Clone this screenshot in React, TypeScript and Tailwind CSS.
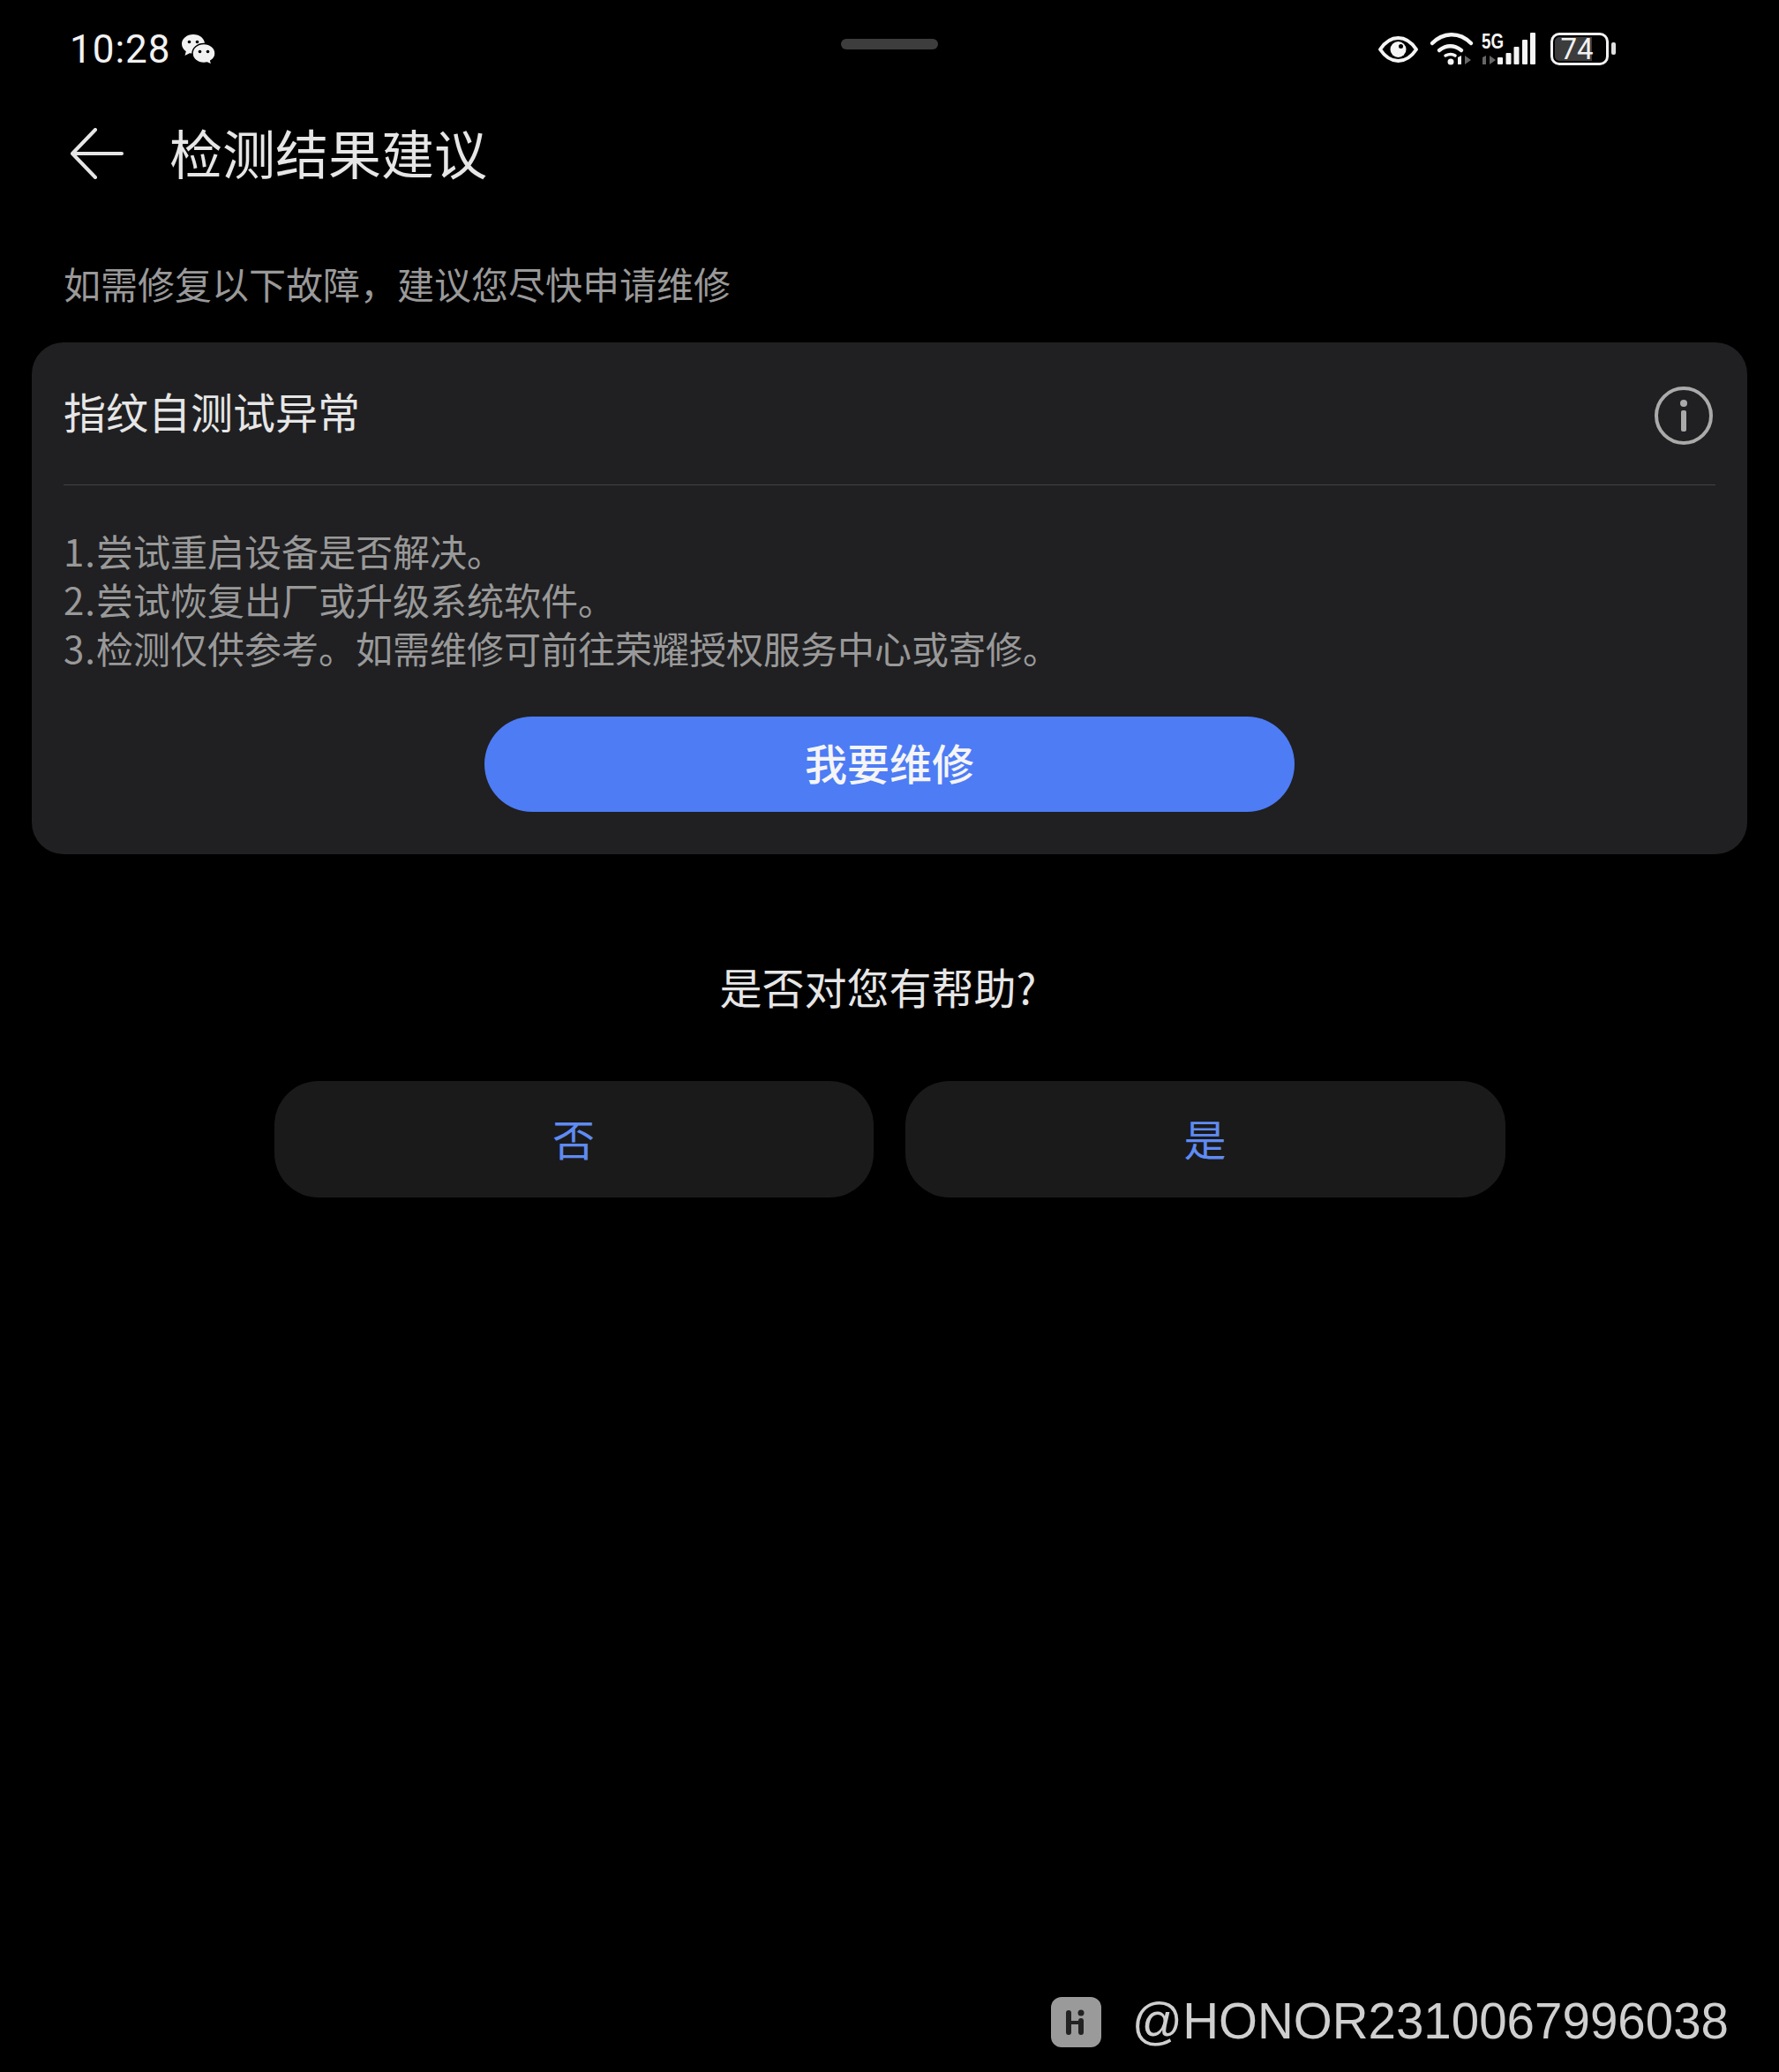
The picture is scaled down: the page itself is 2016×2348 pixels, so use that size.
import React from 'react'

const cjk = 'font-["Noto_Sans_CJK_SC","Noto_Sans",sans-serif]'

function WechatIcon() {
  return (
    <svg width="40" height="36" viewBox="0 0 40 36" fill="none">
      <path d="M14 1C6.8 1 1 5.8 1 11.8c0 3.4 1.9 6.4 4.8 8.4L4.5 25l5.4-2.7c1.3.3 2.7.5 4.1.5 7.200 0 13-4.800 13-11S21.200 1 14 1z" fill="#f2f2f2" />
      <circle cx="9.500" cy="9.500" r="1.800" fill="#000" />
      <circle cx="18.500" cy="9.500" r="1.800" fill="#000" />
      <path d="M26 11.500c-7.200 0-13 4.900-13 11s5.800 11 13 11c1.300 0 2.600-.2 3.800-.5l5.200 2.500-1.200-4.500c3.200-2 5.200-5.100 5.200-8.500 0-6.100-5.800-11-13-11z" fill="#f2f2f2" stroke="#000" strokeWidth="1.500" />
      <circle cx="21.500" cy="20.500" r="1.800" fill="#000" />
      <circle cx="30.500" cy="20.500" r="1.800" fill="#000" />
    </svg>
  )
}

function StatusIcons() {
  return (
    <svg width="184" height="44" viewBox="0 0 184 44" fill="none">
      {/* eye */}
      <path d="M4 22C10 13 17 9 24.500 9S39 13 45 22c-6 9-13 13-20.500 13S10 31 4 22z" stroke="#f5f5f5" strokeWidth="4" strokeLinejoin="round" />
      <circle cx="24.500" cy="22" r="9" fill="#f5f5f5" />
      <circle cx="27.500" cy="18.500" r="2.500" fill="#000" />
      {/* wifi */}
      <path d="M63 15c12-12 30-14 44 0" stroke="#f5f5f5" strokeWidth="4.500" strokeLinecap="round" />
      <path d="M71 23c8-6 17-6 25 0" stroke="#f5f5f5" strokeWidth="4.500" strokeLinecap="round" />
      <path d="M78 29c4-2 8-2 11 0" stroke="#f5f5f5" strokeWidth="3.500" strokeLinecap="round" />
      <circle cx="84" cy="36" r="3.500" fill="#f5f5f5" />
      <path d="M92 31l4-2v10h-4z" fill="#f5f5f5" />
      <path d="M100 29v10l7-5z" fill="#666" />
      {/* sim arrows */}
      <path d="M120 31l4-2v10h-4z" fill="#666" />
      <path d="M128 29v10l7-5z" fill="#666" />
      {/* 5G */}
      <text x="119" y="21" fill="#f5f5f5" fontSize="23" fontWeight="700" fontFamily="Liberation Sans, sans-serif" textLength="25" lengthAdjust="spacingAndGlyphs">5G</text>
      {/* signal */}
      <rect x="137" y="31" width="6" height="8" rx="1" fill="#f5f5f5" />
      <rect x="146.500" y="26" width="6" height="13" rx="1" fill="#f5f5f5" />
      <rect x="155.500" y="19" width="6" height="20" rx="1" fill="#f5f5f5" />
      <rect x="165" y="11" width="6" height="28" rx="1" fill="#f5f5f5" />
      <rect x="174" y="3" width="6" height="36" rx="1" fill="#f5f5f5" />
    </svg>
  )
}

function Battery() {
  return (
    <div className="flex items-center gap-[3px] -mt-[2px]">
      <div className="relative w-[66px] h-[37px] rounded-[10px] border-[3px] border-[#f2f2f2] overflow-hidden">
        <div className="absolute left-[2px] top-[2px] bottom-[2px] w-[42px] rounded-l-[5px] bg-[#3c3c3c]" />
        <span className='absolute inset-0 flex items-center justify-center pr-[6px] text-[33px] leading-none text-[#f2f2f2] font-["Roboto",sans-serif]'>74</span>
      </div>
      <div className="w-[5px] h-[14px] rounded-[2px] bg-[#e0e0e0]" />
    </div>
  )
}

export default function App() {
  return (
    <div className={`w-[2016px] h-[2348px] bg-black flex flex-col ${cjk}`}>
      {/* status bar */}
      <div className="h-[112px] pt-[32px] grid grid-cols-[1fr_110px_1fr] items-start">
        <div className="pl-[79px] flex items-center gap-[11px] h-[48px]">
          <span className='text-[44px] leading-none text-[#f2f2f2] font-["Roboto",sans-serif] tracking-[1px]'>10:28</span>
          <WechatIcon />
        </div>
        <div className="mt-[12px] h-[12px] rounded-full bg-[#3d3d3d]" />
        <div className="pr-[185px] flex justify-end items-center gap-[13px] h-[48px]">
          <StatusIcons />
          <Battery />
        </div>
      </div>

      {/* title */}
      <div className="h-[126px] pl-[80px] flex items-center gap-[52px]">
        <svg width="60" height="58" viewBox="0 0 60 58" fill="none" className="shrink-0 -mt-[2px]">
          <path d="M28 2L2 29l26 27" stroke="#e6e6e6" strokeWidth="4" strokeLinecap="round" strokeLinejoin="round" />
          <path d="M3 29h55" stroke="#e6e6e6" strokeWidth="4" strokeLinecap="round" />
        </svg>
        <h1 className="pb-[6px] text-[60px] leading-none font-normal text-[#e6e6e6]">检测结果建议</h1>
      </div>

      {/* subtitle */}
      <p className="mt-[53px] ml-[72px] text-[42px] leading-[60px] text-[#999999]">如需修复以下故障，建议您尽快申请维修</p>

      {/* card */}
      <div className="mt-[37px] mx-[36px] h-[580px] rounded-[36px] bg-[#202022] px-[36px] flex flex-col">
        <div className="h-[162px] flex items-center justify-between border-b border-[#424244]">
          <span className="pb-[8px] text-[48px] leading-none text-[#e6e6e6]">指纹自测试异常</span>
          <svg width="66" height="66" viewBox="0 0 66 66" fill="none" className="mr-[3px] mt-[4px]">
            <circle cx="33" cy="33" r="31" stroke="#aaaaaa" strokeWidth="4" />
            <circle cx="33" cy="19" r="4" fill="#aaaaaa" />
            <rect x="30" y="27" width="6" height="24" rx="2" fill="#aaaaaa" />
          </svg>
        </div>
        <div className="mt-[46px] text-[42px] leading-[55px] text-[#999999]">
          <p><span className="tracking-[1px]">1.</span>尝试重启设备是否解决。</p>
          <p><span className="tracking-[1px]">2.</span>尝试恢复出厂或升级系统软件。</p>
          <p><span className="tracking-[1px]">3.</span>检测仅供参考。如需维修可前往荣耀授权服务中心或寄修。</p>
        </div>
        <button className="mt-[51px] mx-auto w-[918px] h-[108px] rounded-[54px] bg-[#4d7cf5] pb-[6px] text-[48px] font-medium text-[#f5f5f5]">
          我要维修
        </button>
      </div>

      {/* feedback */}
      <p className="mt-[113px] pr-[26px] text-center text-[48px] leading-[72px] text-[#e6e6e6]">是否对您有帮助?</p>
      <div className="mt-[72px] flex justify-center gap-[36px]">
        <button className="w-[679px] h-[132px] rounded-[50px] bg-[#1a1a1a] pb-[5px] text-[48px] text-[#5f8bf2]">否</button>
        <button className="w-[680px] h-[132px] rounded-[50px] bg-[#1a1a1a] pb-[5px] text-[48px] text-[#5f8bf2]">是</button>
      </div>

      {/* watermark */}
      <div className="mt-auto mb-[28px] pr-[57px] flex justify-end items-center gap-[35px]">
        <div className="w-[57px] h-[57px] rounded-[12px] bg-[#9a9a9a] flex items-center justify-center">
          <svg width="26" height="32" viewBox="0 0 26 32" fill="none">
            <rect x="2" y="2" width="6" height="28" rx="3" fill="#222" />
            <rect x="16" y="11" width="6" height="19" rx="3" fill="#222" />
            <circle cx="19" cy="5" r="3.500" fill="#222" />
            <rect x="7" y="14" width="10" height="4" fill="#222" />
          </svg>
        </div>
        <span className='text-[56.500px] leading-none text-[#cfcfcf] font-["Liberation_Sans",sans-serif]'>@HONOR2310067996038</span>
      </div>
    </div>
  )
}
